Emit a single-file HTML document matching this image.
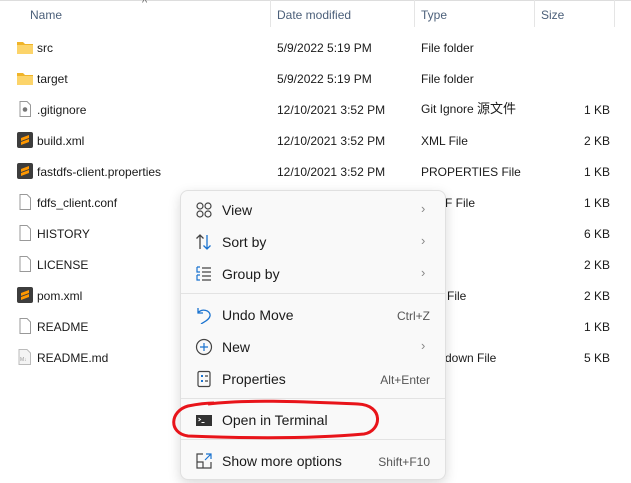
<!DOCTYPE html>
<html><head><meta charset="utf-8"><style>
*{margin:0;padding:0;box-sizing:border-box}
body{width:631px;height:483px;background:#fff;position:relative;overflow:hidden;font-family:"Segoe UI","Liberation Sans","Noto Sans CJK SC",sans-serif;font-size:12px;line-height:16px;color:#1a1a1a}
.a{position:absolute;white-space:nowrap;line-height:16px}
.h{color:#4c607a;top:7px}
.vd{position:absolute;top:0;width:1px;height:27px;background:#e5e5e5}
.ic{position:absolute;left:17px;width:16px;height:16px}
.menu{position:absolute;left:180px;top:190px;width:266px;height:290px;background:#f9f9f9;border:1px solid #e0e0e0;border-radius:8px;box-shadow:0 4px 12px rgba(0,0,0,.15);font-size:14px;color:#1a1a1a}
.mi{position:absolute;left:41px;line-height:18px}
.sc{position:absolute;right:15px;font-size:12px;color:#555}
.ar{position:absolute;left:240px;color:#888;font-size:13px}
.sep{position:absolute;left:0;right:0;height:1px;background:#e3e3e3}
.mic{position:absolute;left:14px;width:18px;height:18px}
.r{margin-top:1px}
</style></head><body>
<div class="a" style="left:0;top:0;width:631px;height:1px;background:#ddd"></div>
<div class="a" style="left:142px;top:-5px;color:#666;font-size:11px">^</div>
<div class="a h" style="left:30px">Name</div>
<div class="vd" style="left:270px"></div>
<div class="a h" style="left:277px">Date modified</div>
<div class="vd" style="left:414px"></div>
<div class="a h" style="left:421px">Type</div>
<div class="vd" style="left:534px"></div>
<div class="a h" style="left:541px">Size</div>
<div class="vd" style="left:614px"></div>

<svg class="ic" style="top:39px" viewBox="0 0 16 16"><path d="M0 3h6l2 2h8v10H0z" fill="#f0b429"/><path d="M0 6h16v9H0z" fill="#fcd46a"/></svg>
<div class="a" style="left:37px;top:40px">src</div><div class="a" style="left:277px;top:40px">5/9/2022 5:19 PM</div><div class="a" style="left:421px;top:40px">File folder</div>
<svg class="ic" style="top:70px" viewBox="0 0 16 16"><path d="M0 3h6l2 2h8v10H0z" fill="#f0b429"/><path d="M0 6h16v9H0z" fill="#fcd46a"/></svg>
<div class="a" style="left:37px;top:71px">target</div><div class="a" style="left:277px;top:71px">5/9/2022 5:19 PM</div><div class="a" style="left:421px;top:71px">File folder</div>
<svg class="ic" style="top:101px" viewBox="0 0 16 16"><path d="M3 .5h7l3.5 3.5v11.5H3z" fill="#fff" stroke="#999"/><circle cx="8" cy="8.5" r="2.3" fill="#777"/></svg>
<div class="a" style="left:37px;top:102px">.gitignore</div><div class="a" style="left:277px;top:102px">12/10/2021 3:52 PM</div><div class="a" style="left:421px;top:101px;height:16px;overflow:visible">Git Ignore <span style="font-size:13px">源文件</span></div><div class="a" style="left:584px;top:102px">1 KB</div>
<svg class="ic" style="top:132px" viewBox="0 0 16 16"><rect width="16" height="16" rx="2" fill="#3d3d3d"/><path d="M4 6l8-3v3L4 9zM12 10L4 13v-3l8-3z" fill="#ff9800"/></svg>
<div class="a" style="left:37px;top:133px">build.xml</div><div class="a" style="left:277px;top:133px">12/10/2021 3:52 PM</div><div class="a" style="left:421px;top:133px">XML File</div><div class="a" style="left:584px;top:133px">2 KB</div>
<svg class="ic" style="top:163px" viewBox="0 0 16 16"><rect width="16" height="16" rx="2" fill="#3d3d3d"/><path d="M4 6l8-3v3L4 9zM12 10L4 13v-3l8-3z" fill="#ff9800"/></svg>
<div class="a" style="left:37px;top:164px">fastdfs-client.properties</div><div class="a" style="left:277px;top:164px">12/10/2021 3:52 PM</div><div class="a" style="left:421px;top:164px">PROPERTIES File</div><div class="a" style="left:584px;top:164px">1 KB</div>
<svg class="ic" style="top:194px" viewBox="0 0 16 16"><path d="M3 .5h7l3.5 3.5v11.5H3z" fill="#fff" stroke="#999"/></svg>
<div class="a" style="left:37px;top:195px">fdfs_client.conf</div><div class="a" style="left:445px;top:195px">F File</div><div class="a" style="left:584px;top:195px">1 KB</div>
<svg class="ic" style="top:225px" viewBox="0 0 16 16"><path d="M3 .5h7l3.5 3.5v11.5H3z" fill="#fff" stroke="#999"/></svg>
<div class="a" style="left:37px;top:226px">HISTORY</div><div class="a" style="left:584px;top:226px">6 KB</div>
<svg class="ic" style="top:256px" viewBox="0 0 16 16"><path d="M3 .5h7l3.5 3.5v11.5H3z" fill="#fff" stroke="#999"/></svg>
<div class="a" style="left:37px;top:257px">LICENSE</div><div class="a" style="left:584px;top:257px">2 KB</div>
<svg class="ic" style="top:287px" viewBox="0 0 16 16"><rect width="16" height="16" rx="2" fill="#3d3d3d"/><path d="M4 6l8-3v3L4 9zM12 10L4 13v-3l8-3z" fill="#ff9800"/></svg>
<div class="a" style="left:37px;top:288px">pom.xml</div><div class="a" style="left:447px;top:288px">File</div><div class="a" style="left:584px;top:288px">2 KB</div>
<svg class="ic" style="top:318px" viewBox="0 0 16 16"><path d="M3 .5h7l3.5 3.5v11.5H3z" fill="#fff" stroke="#999"/></svg>
<div class="a" style="left:37px;top:319px">README</div><div class="a" style="left:584px;top:319px">1 KB</div>
<svg class="ic" style="top:349px" viewBox="0 0 16 16"><path d="M2 .5h8l3.5 3.5v11.5H2z" fill="#f4f4f4" stroke="#bbb"/><text x="3" y="12" font-size="5" fill="#999">M↓</text></svg>
<div class="a" style="left:37px;top:350px">README.md</div><div class="a" style="left:445px;top:350px">down File</div><div class="a" style="left:584px;top:350px">5 KB</div>

<div class="menu">
<svg class="mic" style="top:10px" viewBox="0 0 18 18" fill="none" stroke="#444" stroke-width="1.2"><circle cx="5" cy="5" r="3"/><circle cx="13" cy="5" r="3"/><circle cx="5" cy="13" r="3"/><circle cx="13" cy="13" r="3"/></svg>
<div class="mi" style="top:10px">View</div><div class="ar" style="top:10px">›</div>
<svg class="mic" style="top:42px" viewBox="0 0 18 18" fill="none" stroke-width="1.3"><path d="M5 16V2M1.5 5.5L5 2l3.5 3.5" stroke="#444"/><path d="M12 2v14M8.5 12.5L12 16l3.5-3.5" stroke="#1a73d0"/></svg>
<div class="mi" style="top:42px">Sort by</div><div class="ar" style="top:42px">›</div>
<svg class="mic" style="top:74px" viewBox="0 0 18 18" fill="none" stroke-width="1.2"><path d="M2 2h3M2 2v5h3M2 10h3M2 10v5h3" stroke="#1a73d0"/><path d="M7 3h9M7 7h9M7 11h9M7 15h9" stroke="#444"/></svg>
<div class="mi" style="top:74px">Group by</div><div class="ar" style="top:74px">›</div>
<div class="sep" style="top:102px"></div>
<svg class="mic" style="top:115px" viewBox="0 0 18 18" fill="none" stroke="#1a73d0" stroke-width="1.3"><path d="M3 2v5h5M3 7c3-5 13-3 12 3-1 4-6 6-9 8"/></svg>
<div class="mi" style="top:115px">Undo Move</div><div class="sc" style="top:117px">Ctrl+Z</div>
<svg class="mic" style="top:147px" viewBox="0 0 18 18" fill="none" stroke-width="1.2"><circle cx="9" cy="9" r="7.5" stroke="#444"/><path d="M9 5v8M5 9h8" stroke="#1a73d0"/></svg>
<div class="mi" style="top:147px">New</div><div class="ar" style="top:147px">›</div>
<svg class="mic" style="top:179px" viewBox="0 0 18 18" fill="none" stroke-width="1.2"><rect x="3" y="1.5" width="12" height="15" rx="1.5" stroke="#444"/><path d="M6 6h2M6 11h2" stroke="#1a73d0" stroke-width="2"/><path d="M10 6h3M10 11h3" stroke="#444"/></svg>
<div class="mi" style="top:179px">Properties</div><div class="sc" style="top:181px">Alt+Enter</div>
<div class="sep" style="top:207px"></div>
<svg class="mic" style="top:220px" viewBox="0 0 18 18"><rect x="1" y="4" width="16" height="11" fill="#333"/><path d="M3.5 7l2 1.5-2 1.5M6.5 11.5h3" stroke="#fff" fill="none"/></svg>
<div class="mi" style="top:220px">Open in Terminal</div>
<div class="sep" style="top:248px"></div>
<svg class="mic" style="top:261px" viewBox="0 0 18 18" fill="none" stroke-width="1.2"><path d="M8 2H2v14h14v-6M2 10h6v6" stroke="#444"/><path d="M11 2h5v5M16 2l-6 6" stroke="#1a73d0"/></svg>
<div class="mi" style="top:261px">Show more options</div><div class="sc" style="top:263px">Shift+F10</div>
</div>
<svg class="a" style="left:168px;top:396px" width="218" height="46" viewBox="0 0 218 46"><path d="M40 8C80 3 140 6 190 8 216 9 214 35 196 38 140 43 70 42 20 40 0 37 2 15 20 10 30 8 40 7 46 7" fill="none" stroke="#e8141a" stroke-width="3"/></svg>
</body></html>
